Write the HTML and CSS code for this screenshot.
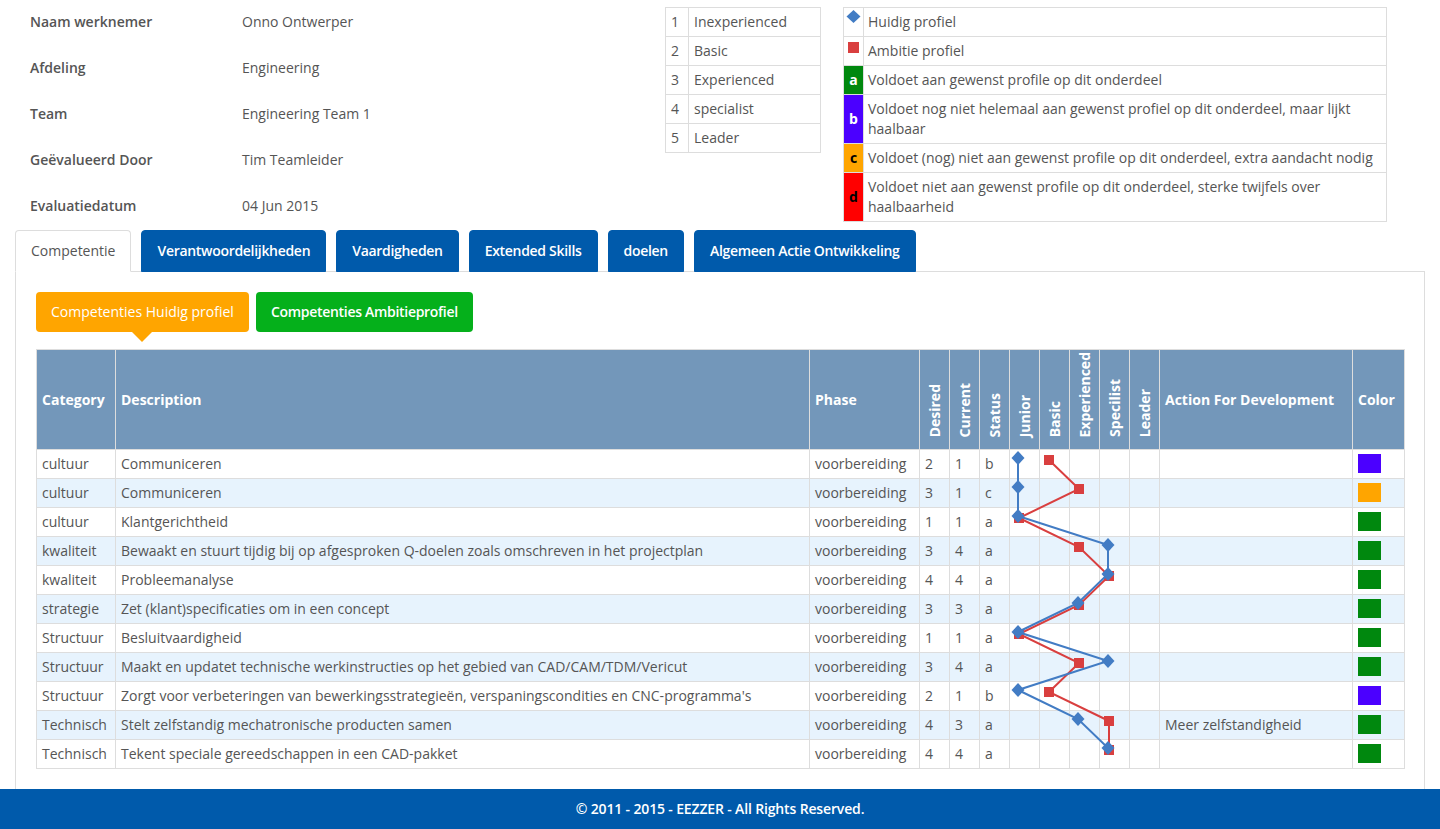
FILE: index.html
```html
<!DOCTYPE html>
<html lang="nl">
<head>
<meta charset="utf-8">
<title>Evaluatie - Competentie</title>
<link rel="stylesheet" href="styles.css">
</head>
<body>
<div class="page">
  <div class="top">
    <div class="info">
      <div class="info-row"><span class="info-label">Naam werknemer</span><span class="info-value">Onno Ontwerper</span></div>
      <div class="info-row"><span class="info-label">Afdeling</span><span class="info-value">Engineering</span></div>
      <div class="info-row"><span class="info-label">Team</span><span class="info-value">Engineering Team 1</span></div>
      <div class="info-row"><span class="info-label">Geëvalueerd Door</span><span class="info-value">Tim Teamleider</span></div>
      <div class="info-row"><span class="info-label">Evaluatiedatum</span><span class="info-value">04 Jun 2015</span></div>
    </div>
    <table class="levels">
      <tr><td class="num">1</td><td>Inexperienced</td></tr>
      <tr><td class="num">2</td><td>Basic</td></tr>
      <tr><td class="num">3</td><td>Experienced</td></tr>
      <tr><td class="num">4</td><td>specialist</td></tr>
      <tr><td class="num">5</td><td>Leader</td></tr>
    </table>
    <table class="legend">
      <tr>
        <td class="ico ico-shape"><svg class="ico-svg" width="19" height="27" viewBox="0 0 19 27"><path d="M9.5,2 L16.5,8.5 L9.5,15 L2.5,8.5 Z" fill="#427cc4"/></svg></td>
        <td>Huidig profiel</td>
      </tr>
      <tr>
        <td class="ico ico-shape"><svg class="ico-svg" width="19" height="27" viewBox="0 0 19 27"><rect x="4" y="5" width="11" height="11" fill="#d93f3f"/></svg></td>
        <td>Ambitie profiel</td>
      </tr>
      <tr><td class="ico st-a">a</td><td>Voldoet aan gewenst profile op dit onderdeel</td></tr>
      <tr><td class="ico st-b">b</td><td>Voldoet nog niet helemaal aan gewenst profiel op dit onderdeel, maar lijkt haalbaar</td></tr>
      <tr><td class="ico st-c">c</td><td>Voldoet (nog) niet aan gewenst profile op dit onderdeel, extra aandacht nodig</td></tr>
      <tr><td class="ico st-d">d</td><td>Voldoet niet aan gewenst profile op dit onderdeel, sterke twijfels over haalbaarheid</td></tr>
    </table>
  </div>

  <ul class="tabs">
    <li class="tab active">Competentie</li>
    <li class="tab">Verantwoordelijkheden</li>
    <li class="tab">Vaardigheden</li>
    <li class="tab">Extended Skills</li>
    <li class="tab">doelen</li>
    <li class="tab">Algemeen Actie Ontwikkeling</li>
  </ul>

  <div class="panel">
    <div class="profile-buttons">
      <button class="pbtn pbtn-orange">Competenties Huidig profiel</button>
      <button class="pbtn pbtn-green">Competenties Ambitieprofiel</button>
    </div>

    <div class="table-wrap">
      <table class="comp">
        <colgroup>
          <col class="c-cat"><col class="c-desc"><col class="c-phase">
          <col class="c-narrow"><col class="c-narrow"><col class="c-narrow">
          <col class="c-narrow"><col class="c-narrow"><col class="c-narrow"><col class="c-narrow"><col class="c-narrow">
          <col class="c-action"><col class="c-color">
        </colgroup>
        <thead>
          <tr>
            <th>Category</th>
            <th>Description</th>
            <th>Phase</th>
            <th class="vt"><span>Desired</span></th>
            <th class="vt"><span>Current</span></th>
            <th class="vt"><span>Status</span></th>
            <th class="vt"><span>Junior</span></th>
            <th class="vt"><span>Basic</span></th>
            <th class="vt"><span>Experienced</span></th>
            <th class="vt"><span>Specilist</span></th>
            <th class="vt"><span>Leader</span></th>
            <th>Action For Development</th>
            <th>Color</th>
          </tr>
        </thead>
        <tbody>
          <tr><td>cultuur</td><td>Communiceren</td><td>voorbereiding</td><td>2</td><td>1</td><td>b</td><td></td><td></td><td></td><td></td><td></td><td></td><td><span class="sw sw-b"></span></td></tr>
          <tr><td>cultuur</td><td>Communiceren</td><td>voorbereiding</td><td>3</td><td>1</td><td>c</td><td></td><td></td><td></td><td></td><td></td><td></td><td><span class="sw sw-c"></span></td></tr>
          <tr><td>cultuur</td><td>Klantgerichtheid</td><td>voorbereiding</td><td>1</td><td>1</td><td>a</td><td></td><td></td><td></td><td></td><td></td><td></td><td><span class="sw sw-a"></span></td></tr>
          <tr><td>kwaliteit</td><td>Bewaakt en stuurt tijdig bij op afgesproken Q-doelen zoals omschreven in het projectplan</td><td>voorbereiding</td><td>3</td><td>4</td><td>a</td><td></td><td></td><td></td><td></td><td></td><td></td><td><span class="sw sw-a"></span></td></tr>
          <tr><td>kwaliteit</td><td>Probleemanalyse</td><td>voorbereiding</td><td>4</td><td>4</td><td>a</td><td></td><td></td><td></td><td></td><td></td><td></td><td><span class="sw sw-a"></span></td></tr>
          <tr><td>strategie</td><td>Zet (klant)specificaties om in een concept</td><td>voorbereiding</td><td>3</td><td>3</td><td>a</td><td></td><td></td><td></td><td></td><td></td><td></td><td><span class="sw sw-a"></span></td></tr>
          <tr><td>Structuur</td><td>Besluitvaardigheid</td><td>voorbereiding</td><td>1</td><td>1</td><td>a</td><td></td><td></td><td></td><td></td><td></td><td></td><td><span class="sw sw-a"></span></td></tr>
          <tr><td>Structuur</td><td>Maakt en updatet technische werkinstructies op het gebied van CAD/CAM/TDM/Vericut</td><td>voorbereiding</td><td>3</td><td>4</td><td>a</td><td></td><td></td><td></td><td></td><td></td><td></td><td><span class="sw sw-a"></span></td></tr>
          <tr><td>Structuur</td><td>Zorgt voor verbeteringen van bewerkingsstrategieën, verspaningscondities en CNC-programma's</td><td>voorbereiding</td><td>2</td><td>1</td><td>b</td><td></td><td></td><td></td><td></td><td></td><td></td><td><span class="sw sw-b"></span></td></tr>
          <tr><td>Technisch</td><td>Stelt zelfstandig mechatronische producten samen</td><td>voorbereiding</td><td>4</td><td>3</td><td>a</td><td></td><td></td><td></td><td></td><td></td><td>Meer zelfstandigheid</td><td><span class="sw sw-a"></span></td></tr>
          <tr><td>Technisch</td><td>Tekent speciale gereedschappen in een CAD-pakket</td><td>voorbereiding</td><td>4</td><td>4</td><td>a</td><td></td><td></td><td></td><td></td><td></td><td></td><td><span class="sw sw-a"></span></td></tr>
        </tbody>
      </table>

      <svg class="chart" width="150" height="320" viewBox="0 0 150 320">
        <defs>
          <path id="dia" d="M0,-7 L6.5,0 L0,7 L-6.5,0 Z"/>
          <rect id="sq" x="-5" y="-5" width="10" height="10"/>
        </defs>
        <polyline fill="none" stroke="#d93f3f" stroke-width="2" points="40,11 70,40 10,69 70,98 100,127 70,156 10,185 70,214 40,243 100,272 100,301"/>
        <g fill="#d93f3f">
          <use href="#sq" x="40" y="11"/><use href="#sq" x="70" y="40"/><use href="#sq" x="10" y="69"/>
          <use href="#sq" x="70" y="98"/><use href="#sq" x="100" y="127"/><use href="#sq" x="70" y="156"/>
          <use href="#sq" x="10" y="185"/><use href="#sq" x="70" y="214"/><use href="#sq" x="40" y="243"/>
          <use href="#sq" x="100" y="272"/><use href="#sq" x="100" y="301"/>
        </g>
        <polyline fill="none" stroke="#427cc4" stroke-width="2" points="9,9 9,38 9,67 99,96 99,125 69,154 9,183 99,212 9,241 69,270 99,299"/>
        <g fill="#427cc4">
          <use href="#dia" x="9" y="9"/><use href="#dia" x="9" y="38"/><use href="#dia" x="9" y="67"/>
          <use href="#dia" x="99" y="96"/><use href="#dia" x="99" y="125"/><use href="#dia" x="69" y="154"/>
          <use href="#dia" x="9" y="183"/><use href="#dia" x="99" y="212"/><use href="#dia" x="9" y="241"/>
          <use href="#dia" x="69" y="270"/><use href="#dia" x="99" y="299"/>
        </g>
      </svg>
    </div>
  </div>
</div>
<footer class="footer">© 2011 - 2015 - EEZZER - All Rights Reserved.</footer>
</body>
</html>
```

FILE: styles.css
```css
* { box-sizing: border-box; }

html, body { margin: 0; padding: 0; }

body {
  font-family: "Open Sans", "Liberation Sans", Arial, sans-serif;
  font-size: 14px;
  line-height: 20px;
  color: #555;
  background: #fff;
}

.page { padding: 0 15px; }

/* ---------- top area ---------- */
.top {
  display: flex;
  align-items: flex-start;
  padding-top: 7px;
}

.info {
  width: 650px;
  padding: 5px 0 0 15px;
}

.info-row {
  display: flex;
  height: 20px;
  margin-bottom: 26px;
}
.info-row:last-child { margin-bottom: 0; }

.info-label {
  width: 212px;
  font-weight: 600;
}

.levels, .legend {
  border-collapse: collapse;
}

.levels td, .legend td {
  border: 1px solid #ddd;
  padding: 4px 5px;
  vertical-align: top;
}

.levels { width: 156px; }
.levels .num { width: 23px; }

.legend {
  width: 544px;
  margin-left: 22px;
}

.legend .ico {
  width: 19px;
  padding: 0;
  text-align: center;
  vertical-align: middle;
  font-weight: 700;
}

.legend td + td { padding-left: 4px; }

.legend .ico-shape { vertical-align: top; }
.ico-svg { display: block; }

.st-a { background: #00880e; color: #fff; }
.st-b { background: #4b00ff; color: #fff; }
.st-c { background: #ffa500; color: #000; }
.st-d { background: #ff0000; color: #000; }

/* ---------- tabs ---------- */
.tabs {
  display: flex;
  gap: 10px;
  list-style: none;
  margin: 8px 0 0;
  padding: 0;
  border-bottom: 1px solid #ddd;
}

.tab {
  padding: 10px 15px;
  border: 1px solid #005aab;
  background: #005aab;
  color: #fff;
  font-weight: 600;
  letter-spacing: -0.3px;
  border-radius: 4px 4px 0 0;
  margin-bottom: -1px;
}

.tab.active {
  background: #fff;
  border-color: #ddd;
  border-bottom-color: #fff;
  color: #555;
  font-weight: 400;
  letter-spacing: 0;
}

.panel {
  border-left: 1px solid #ddd;
  border-right: 1px solid #ddd;
  padding: 20px 20px 20px;
}

/* ---------- profile buttons ---------- */
.profile-buttons {
  display: flex;
  gap: 7px;
}

.pbtn {
  font: inherit;
  line-height: 20px;
  border: 0;
  border-radius: 4px;
  padding: 10px 15px;
  color: #fff;
  position: relative;
  cursor: pointer;
}

.pbtn-orange { background: #ffa500; }

.pbtn-orange::after {
  content: "";
  position: absolute;
  left: 50%;
  top: 100%;
  margin-left: -10px;
  border-left: 10px solid transparent;
  border-right: 10px solid transparent;
  border-top: 10px solid #ffa500;
}

.pbtn-green {
  background: #05b01b;
  font-weight: 600;
  letter-spacing: -0.3px;
}

/* ---------- competence table ---------- */
.table-wrap {
  position: relative;
  margin-top: 17px;
}

.comp {
  width: 1368px;
  border-collapse: collapse;
  table-layout: fixed;
}

.c-cat { width: 79px; }
.c-desc { width: 694px; }
.c-phase { width: 110px; }
.c-narrow { width: 30px; }
.c-action { width: 193px; }
.c-color { width: 52px; }

.comp th, .comp td {
  border: 1px solid #ddd;
  padding: 4px 5px;
  text-align: left;
  white-space: nowrap;
  overflow: hidden;
}

.comp thead tr { height: 100px; }

.comp thead th {
  background: #7397ba;
  color: #fff;
  font-weight: 700;
  height: 100px;
  vertical-align: middle;
}

.comp thead th.vt {
  vertical-align: bottom;
  padding: 0 5px 7px;
}

.vt span {
  display: inline-block;
  writing-mode: vertical-rl;
  transform: rotate(180deg);
  line-height: 20px;
}

.comp tbody td {
  height: 29px;
  vertical-align: top;
}

.comp tbody tr:nth-child(even) td { background: #e7f3fd; }

.sw {
  display: block;
  width: 23px;
  height: 19px;
}
.sw-a { background: #00880e; }
.sw-b { background: #4b00ff; }
.sw-c { background: #ffa500; }

.chart {
  position: absolute;
  left: 973px;
  top: 100px;
  overflow: visible;
  pointer-events: none;
}

/* ---------- footer ---------- */
.footer {
  height: 40px;
  line-height: 40px;
  background: #005aab;
  color: #fff;
  font-weight: 600;
  letter-spacing: -0.15px;
  text-align: center;
}
```
